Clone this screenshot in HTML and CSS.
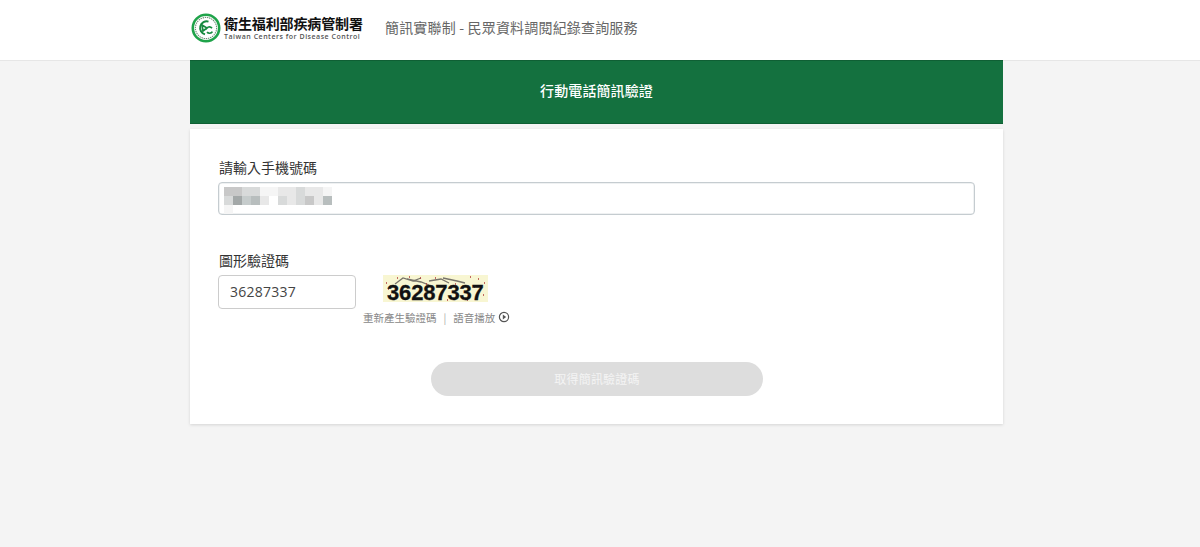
FILE: index.html
```html
<!DOCTYPE html>
<html lang="zh-Hant">
<head>
<meta charset="utf-8">
<title>行動電話簡訊驗證</title>
<link rel="stylesheet" href="styles.css">
</head>
<body>
<header class="topbar">
  <div class="topbar-inner">
    <svg class="logo-mark" viewBox="0 0 30 30" aria-hidden="true">
      <circle cx="15" cy="15" r="13.2" fill="none" stroke="#1fa34a" stroke-width="2.6"/>
      <circle cx="15" cy="15" r="10.6" fill="none" stroke="#6f8f78" stroke-width="1.1" stroke-dasharray="1.4 .8"/>
      <circle cx="15" cy="15" r="8.9" fill="#fff"/>
      <path d="M17.5 8.6A6.6 6.6 0 1 0 14 21.4" fill="none" stroke="#178a3f" stroke-width="2"/>
      <path d="M11 12l5 3-4 3zM15 16.5a3.4 3.4 0 0 1 6-1.2M21.4 18.6a3.4 3.4 0 0 1-5.4.6" fill="none" stroke="#178a3f" stroke-width="1.7"/>
    </svg>
    <div class="logo-text">
      <div class="logo-zh">衛生福利部疾病管制署</div>
      <div class="logo-en">Taiwan Centers for Disease Control</div>
    </div>
    <div class="service-name">簡訊實聯制 - 民眾資料調閱紀錄查詢服務</div>
  </div>
</header>
<main class="page">
  <h1 class="banner">行動電話簡訊驗證</h1>
  <section class="card">
    <label class="field-label">請輸入手機號碼</label>
    <div class="phone-input">
      <div class="mosaic" aria-hidden="true">
        <i class="m3"></i><i class="m3"></i><i class="m2"></i><i class="m2"></i><i class="m0"></i><i class="m0"></i><i class="m1"></i><i class="m1"></i><i class="m2"></i><i class="m1"></i><i class="m1"></i><i class="m0"></i>
        <i class="m2"></i><i class="m4"></i><i class="m2b"></i><i class="m3b"></i><i class="m1"></i><i class="m00"></i><i class="m2"></i><i class="m1"></i><i class="m2"></i><i class="m3"></i><i class="m1"></i><i class="m3b"></i>
        <i class="m0"></i>
      </div>
    </div>
    <label class="field-label captcha-label">圖形驗證碼</label>
    <div class="captcha-row">
      <div class="captcha-input">36287337</div>
      <div class="captcha-box">
        <div class="captcha-image">
          <svg class="captcha-noise" viewBox="0 0 105 27" aria-hidden="true">
            <path d="M12 9l8-6 10 3 8-3M24 4l14 3 8 3M46 6l12-2 8 4M60 3l14 3 8 2" fill="none" stroke="#77736a" stroke-width="1.3"/>
            <path d="M3 8h1M7 20h1M14 3h1M26 2h1M43 9h1M52 3h1M72 9h1M87 2h1M95 4h1M100 20h1M91 12h1M31 24h1M64 25h1M84 25h1M101 8h1M37 3h1M5 14h1" stroke="#b03a3a" stroke-width="1.3"/>
          </svg>
          <span class="captcha-digits">36287337</span>
        </div>
        <div class="captcha-links">
          <span>重新產生驗證碼</span><span class="sep">|</span><span>語音播放</span>
          <svg class="play" viewBox="0 0 12 12" aria-hidden="true"><circle cx="6" cy="6" r="4.6" fill="none" stroke="#555" stroke-width="1.2"/><path d="M4.8 3.6l3.4 2.4-3.4 2.4z" fill="#555"/></svg>
        </div>
      </div>
    </div>
    <div class="actions"><button class="submit" disabled>取得簡訊驗證碼</button></div>
  </section>
</main>
</body>
</html>
```
FILE: styles.css
```css
* { box-sizing: border-box; }
html, body { margin: 0; height: 100%; }
body {
  background: #f4f4f4;
  font-family: "Open Sans", "Noto Sans CJK TC", sans-serif;
  color: #333;
  overflow: hidden;
}
.topbar {
  height: 61px;
  background: #fff;
  border-bottom: 1px solid #e6e6e6;
}
.topbar-inner {
  width: 813px;
  margin-left: 190px;
  height: 60px;
  display: flex;
  align-items: center;
}
.logo-mark { width: 30px; height: 30px; margin: -4px 0 0 1px; flex: none; }
.logo-text { margin: -5px 0 0 3px; width: 161px; }
.logo-zh {
  font: 700 14px/17px "Noto Sans CJK TC", sans-serif;
  color: #111;
  letter-spacing: -.12px;
  white-space: nowrap;
}
.logo-en {
  font: 600 7px/9px "Open Sans", sans-serif;
  color: #555;
  letter-spacing: .52px;
  white-space: nowrap;
}
.service-name {
  margin: -7px 0 0 0;
  font: 400 14px/20px "Noto Sans CJK TC", sans-serif;
  color: #666;
  letter-spacing: .18px;
  white-space: nowrap;
}
.page {
  width: 813px;
  margin: -1px 0 0 190px;
}
.banner {
  margin: 0;
  height: 64px;
  background: #14713f;
  border-top: 1px solid #0f5f34;
  border-bottom: 1px solid #0f5f34;
  color: #fff;
  font: 500 14px/59px "Noto Sans CJK TC", sans-serif;
  letter-spacing: .1px;
  text-align: center;
}
.card {
  margin-top: 5px;
  height: 295px;
  background: #fff;
  box-shadow: 0 1px 3px rgba(0,0,0,.13);
  padding: 27px 28px 0;
}
.field-label {
  display: block;
  font: 400 14px/22px "Noto Sans CJK TC", sans-serif;
  color: #333;
  padding-left: 1px;
}
.phone-input {
  margin-top: 4px;
  height: 33px;
  width: 757px;
  border: 1px solid #c5ccd0;
  box-shadow: inset 0 0 0 .5px #e0e4e6;
  border-radius: 4px;
  background: #fff;
  padding: 4px 0 0 5px;
}
.mosaic {
  display: grid;
  grid-template-columns: repeat(12, 9px);
  grid-auto-rows: 9px;
  height: 24px;
  filter: blur(.7px);
}
.mosaic i { display: block; }
.m00 { background: transparent; }
.m0 { background: #f5f5f5; }
.m1 { background: #e8e8e8; }
.m2 { background: #d8dada; }
.m2b { background: #c6cccc; }
.m3 { background: #c8c8c8; }
.m3b { background: #b8bebe; }
.m4 { background: #a3a8a8; }
.captcha-label { margin-top: 34px; }
.captcha-row {
  margin-top: 4px;
  display: flex;
  align-items: flex-start;
}
.captcha-input {
  width: 138px;
  height: 34px;
  border: 1px solid #ccc;
  border-radius: 4px;
  padding-left: 11px;
  font: 400 14px/32px "Open Sans", sans-serif;
  letter-spacing: .25px;
  color: #444;
}
.captcha-box { margin-left: 7px; }
.captcha-image {
  position: relative;
  width: 105px;
  height: 27px;
  margin-left: 20px;
  background: #f8f6d2;
}
.captcha-noise { position: absolute; left: 0; top: 0; width: 105px; height: 27px; }
.captcha-digits {
  position: absolute;
  left: 4px;
  top: 5px;
  font: 700 22px/26px "Liberation Sans", sans-serif;
  letter-spacing: -.15px;
  color: #111;
  white-space: nowrap;
  -webkit-text-stroke: .3px #111;
}
.captcha-links {
  margin-top: 9px;
  height: 14px;
  display: flex;
  align-items: center;
  font: 400 10.5px/14px "Noto Sans CJK TC", sans-serif;
  color: #888;
  white-space: nowrap;
}
.sep { margin: 0 7px 0 7px; color: #aaa; }
.play { width: 12px; height: 12px; margin: -2px 0 0 3px; }
.actions { display: flex; justify-content: center; margin-top: 37px; padding-left: 1px; }
.submit {
  width: 332px;
  height: 34px;
  border: 0;
  border-radius: 17px;
  background: #dddddd;
  color: #f4f4f4;
  font: 400 12px/34px "Noto Sans CJK TC", sans-serif;
  letter-spacing: .2px;
  padding: 0;
}
```
